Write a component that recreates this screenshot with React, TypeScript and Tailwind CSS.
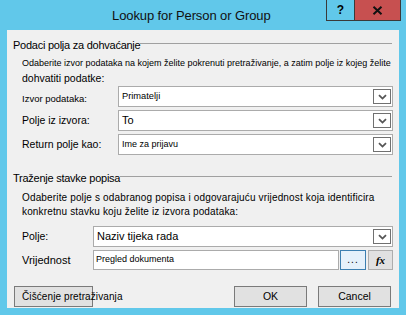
import React from "react";

const F = { fontFamily: '"Liberation Sans", Arial, sans-serif' };

function Chevron() {
  return (
    <svg width="9" height="6" viewBox="0 0 9 6">
      <path d="M1 1.2 L4.5 4.6 L8 1.2" stroke="#555" strokeWidth="1.8" fill="none" />
    </svg>
  );
}

function Combo({ text, textCls }: { text: string; textCls: string }) {
  return (
    <div className="relative flex-1 h-[21px] bg-white border border-[#ababab] flex items-center">
      <span className={`pl-[3px] text-black whitespace-nowrap ${textCls}`}>{text}</span>
      <div className="absolute right-[1px] top-[2px] w-[18px] h-[15px] border border-[#707070] bg-white flex items-center justify-center">
        <Chevron />
      </div>
    </div>
  );
}

function GroupHeading({ text }: { text: string }) {
  return (
    <div className="flex items-center h-[18px] pl-[6px] pr-[7px]">
      <span className="text-[11px] tracking-[-0.25px] text-black whitespace-nowrap leading-none">{text}</span>
      <div className="flex-1 border-t border-[#a0a0a0] -mt-[3px]" />
    </div>
  );
}

export default function App() {
  return (
    <div className="w-[406px] h-[315px] bg-[#61c8ea] flex flex-col overflow-hidden" style={F}>
      <div className="relative h-[30px] shrink-0">
        <div className="pl-[112px] pt-[8px] text-[13px] leading-[16px] text-[#111] tracking-[-0.1px]">
          Lookup for Person or Group
        </div>
        <div className="absolute top-0 left-[326px] flex">
          <div className="w-[29px] h-[21px] border border-[#3a3a3a] border-t-0 flex items-center justify-center text-[12px] font-bold text-black">?</div>
          <div className="w-[46px] h-[21px] border border-[#3a3a3a] border-t-0 border-l-0 bg-[#c75050] flex items-center justify-center">
            <svg width="11" height="9" viewBox="0 0 11 9">
              <path d="M1.5 0.8 L9.5 8.2 M9.5 0.8 L1.5 8.2" stroke="#111" strokeWidth="2" fill="none" />
            </svg>
          </div>
        </div>
      </div>

      <div className="mx-[7px] h-[278px] bg-[#f0f0f0] flex flex-col text-black">
        <div className="h-[6px]" />
        <GroupHeading text="Podaci polja za dohvaćanje" />
        <div className="pl-[15px] pr-[6px] mt-[2px]">
          <div className="h-[14px] leading-[14px] text-[9px] whitespace-nowrap overflow-hidden">
            Odaberite izvor podataka na kojem želite pokrenuti pretraživanje, a zatim polje iz kojeg želite
          </div>
          <div className="h-[16px] leading-[16px] text-[10.5px] whitespace-nowrap">dohvatiti podatke:</div>
          <div className="flex flex-col gap-[3px]">
            <div className="flex items-center">
              <div className="w-[96px] text-[9.5px] pt-[5px]">Izvor podataka:</div>
              <Combo text="Primatelji" textCls="text-[9.3px]" />
            </div>
            <div className="flex items-center">
              <div className="w-[96px] text-[10.5px]">Polje iz izvora:</div>
              <Combo text="To" textCls="text-[11px]" />
            </div>
            <div className="flex items-center">
              <div className="w-[96px] text-[10.5px]">Return polje kao:</div>
              <Combo text="Ime za prijavu" textCls="text-[9px]" />
            </div>
          </div>
        </div>

        <div className="h-[14px]" />
        <GroupHeading text="Traženje stavke popisa" />
        <div className="pl-[15px] pr-[6px] mt-[4px]">
          <div className="text-[10px] leading-[14px] tracking-[0.15px] whitespace-nowrap">
            <div>Odaberite polje s odabranog popisa i odgovarajuću vrijednost koja identificira</div>
            <div>konkretnu stavku koju želite iz izvora podataka:</div>
          </div>
          <div className="flex flex-col gap-[3px] mt-[7px]">
            <div className="flex items-center">
              <div className="w-[71px] text-[10.5px]">Polje:</div>
              <Combo text="Naziv tijeka rada" textCls="text-[11px]" />
            </div>
            <div className="flex items-center">
              <div className="w-[71px] text-[11px]">Vrijednost</div>
              <div className="flex-1 h-[20px] bg-white border border-[#ababab] flex items-center">
                <span className="pl-[2px] text-[9px] whitespace-nowrap">Pregled dokumenta</span>
              </div>
              <div className="ml-[1px] w-[26px] h-[20px] border border-[#3c7fb1] bg-[#e5f1fb] flex items-end justify-center pb-[4px]">
                <span className="text-[10px] leading-none tracking-[1px]">...</span>
              </div>
              <div className="ml-[2px] w-[25px] h-[20px] border border-[#adadad] bg-[#e1e1e1] flex items-center justify-center">
                <span className="text-[11px] italic font-bold leading-none" style={{ fontFamily: '"Liberation Serif", "Times New Roman", serif' }}>fx</span>
              </div>
            </div>
          </div>
        </div>

        <div className="flex items-center mt-[16px] pl-[7px] pr-[8px]">
          <div className="w-[79px] h-[21px] border border-[#7a7a7a] bg-[#e1e1e1] flex items-center overflow-visible">
            <span className="pl-[7px] text-[10px] tracking-[0.1px] whitespace-nowrap">Čišćenje pretraživanja</span>
          </div>
          <div className="flex-1" />
          <div className="w-[73px] h-[21px] border border-[#7a7a7a] bg-[#e1e1e1] flex items-center justify-center text-[10.5px]">OK</div>
          <div className="w-[73px] h-[21px] ml-[11px] border border-[#7a7a7a] bg-[#e1e1e1] flex items-center justify-center text-[10.5px]">Cancel</div>
        </div>
      </div>
    </div>
  );
}
